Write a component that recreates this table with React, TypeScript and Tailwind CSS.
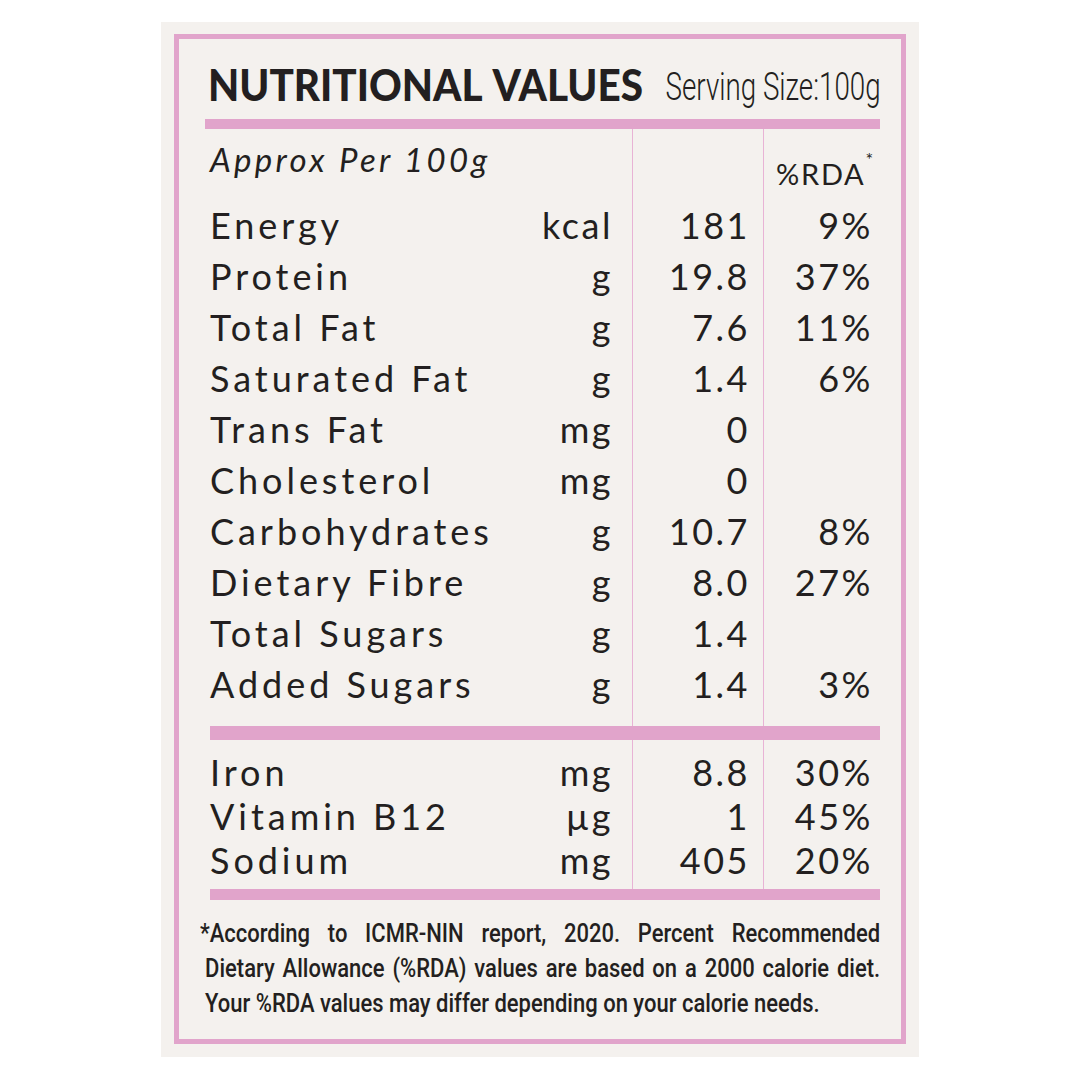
const rows = [
  { name: "Energy", unit: "kcal", value: "181", rda: "9%" },
  { name: "Protein", unit: "g", value: "19.8", rda: "37%" },
  { name: "Total Fat", unit: "g", value: "7.6", rda: "11%" },
  { name: "Saturated Fat", unit: "g", value: "1.4", rda: "6%" },
  { name: "Trans Fat", unit: "mg", value: "0", rda: "" },
  { name: "Cholesterol", unit: "mg", value: "0", rda: "" },
  { name: "Carbohydrates", unit: "g", value: "10.7", rda: "8%" },
  { name: "Dietary Fibre", unit: "g", value: "8.0", rda: "27%" },
  { name: "Total Sugars", unit: "g", value: "1.4", rda: "" },
  { name: "Added Sugars", unit: "g", value: "1.4", rda: "3%" },
]

const minerals = [
  { name: "Iron", unit: "mg", value: "8.8", rda: "30%" },
  { name: "Vitamin B12", unit: "µg", value: "1", rda: "45%" },
  { name: "Sodium", unit: "mg", value: "405", rda: "20%" },
]

type Row = (typeof rows)[number]

function TableRow({ row, height }: { row: Row; height: string }) {
  return (
    <>
      <div className={`flex justify-between pr-[19px] ${height}`}>
        <span className="tracking-[0.11em]">{row.name}</span>
        <span>{row.unit}</span>
      </div>
      <div className={`border-l border-[#e8b3d5] pr-[13px] text-right ${height}`}>{row.value}</div>
      <div className={`border-l border-[#e8b3d5] pr-[7px] text-right ${height}`}>{row.rda}</div>
    </>
  )
}

function Spacer({ height }: { height: string }) {
  return (
    <>
      <div className={height} />
      <div className={`border-l border-[#e8b3d5] ${height}`} />
      <div className={`border-l border-[#e8b3d5] ${height}`} />
    </>
  )
}

export default function App() {
  return (
    <div className="h-[1080px] w-[1080px] bg-white pl-[161px] pt-[22px] font-['Lato',sans-serif] text-[#231f20]">
      <div className="h-[1035px] w-[758px] bg-[#f4f1ee] px-[13px] pt-[12px]">
        <div className="h-[1010px] w-[732px] border-[5px] border-[#e1a4cb]">
          <div className="flex h-[80px] items-end justify-between pb-[13px] pl-[29px] pr-[20px]">
            <div className="w-[436px]">
              <h1 className="origin-left scale-x-[0.94] whitespace-nowrap text-[43px] font-black leading-none [word-spacing:0.08em]">
                NUTRITIONAL VALUES
              </h1>
            </div>
            <div className="flex w-[213px] justify-end">
              <span className="shrink-0 origin-right scale-x-[0.73] whitespace-nowrap font-['Roboto',sans-serif] text-[38px] font-light leading-none">
                Serving Size:100g
              </span>
            </div>
          </div>
          <div className="ml-[26px] mr-[21px] h-[10px] bg-[#e1a4cb]" />

          <div className="ml-[31px] grid w-[670px] grid-cols-[422px_131px_117px] text-[36px] leading-[51px] tracking-[0.07em]">
            <div className="h-[71px] pt-[14px] text-[33px] italic leading-none tracking-[0.1em]">Approx Per 100g</div>
            <div className="h-[71px] border-l border-[#e8b3d5]" />
            <div className="h-[71px] border-l border-[#e8b3d5] pl-[12px] pt-[30px] text-[29px] leading-none tracking-[0.06em]">
              %RDA<sup className="align-[10px] text-[18px]">*</sup>
            </div>

            {rows.map((row) => (
              <TableRow key={row.name} row={row} height="h-[51px]" />
            ))}

            <Spacer height="h-[16px]" />
            <div className="col-span-3 h-[14px] bg-[#e1a4cb]" />
            <Spacer height="h-[10px]" />

            {minerals.map((row) => (
              <TableRow key={row.name} row={row} height="h-[44px] leading-[44px]" />
            ))}

            <Spacer height="h-[7px]" />
            <div className="col-span-3 h-[11px] bg-[#e1a4cb]" />
          </div>

          <div className="ml-[21px] mt-[16px] w-[680px]">
            <div className="w-[804px] origin-left scale-x-[0.846] font-['Roboto',sans-serif] text-[26px] font-medium leading-[35px]">
              <p className="[text-align-last:justify]">*According to ICMR-NIN report, 2020. Percent Recommended</p>
              <p className="pl-[6px] [text-align-last:justify]">Dietary Allowance (%RDA) values are based on a 2000 calorie diet.</p>
              <p className="pl-[6px]">Your %RDA values may differ depending on your calorie needs.</p>
            </div>
          </div>
        </div>
      </div>
    </div>
  )
}
